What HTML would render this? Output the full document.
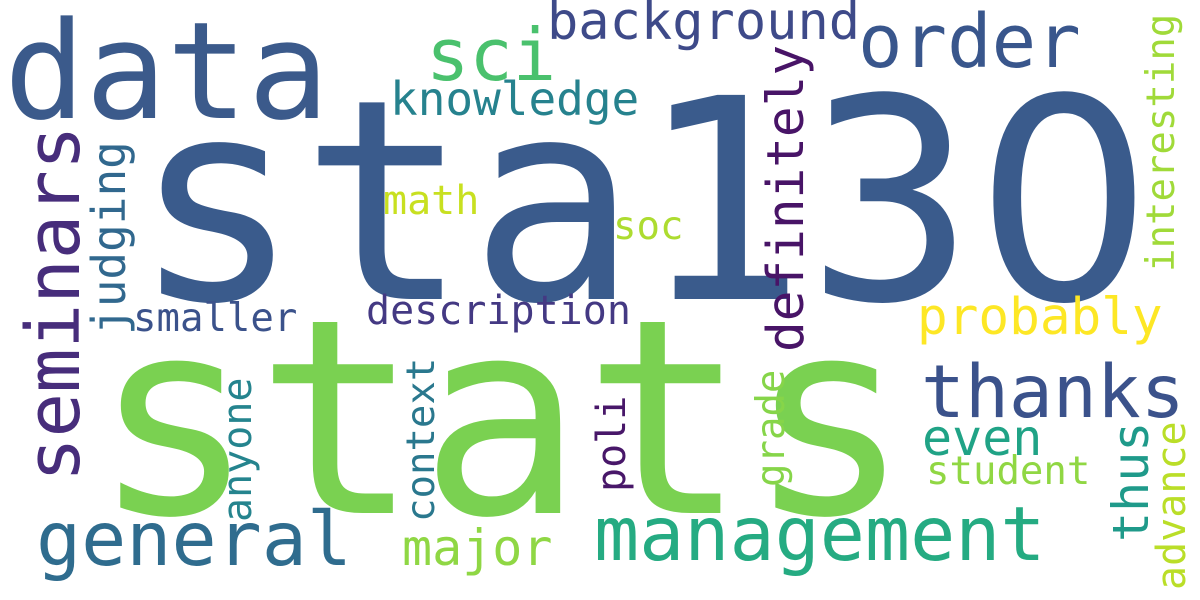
<!DOCTYPE html>
<html><head><meta charset="utf-8"><style>
html,body{margin:0;padding:0;background:#fff;}
body{width:1200px;height:600px;position:relative;overflow:hidden;font-family:"DejaVu Sans Mono","Liberation Mono",monospace;}
.w{position:absolute;line-height:1;white-space:nowrap;}
.v{position:absolute;line-height:1;white-space:nowrap;transform-origin:0 0;transform:rotate(-90deg);}
.z{display:inline-block;width:0.602em;font-family:"DejaVu Sans",sans-serif;text-align:center;}
</style></head><body>
<div class="w" style="left:132px;top:63px;font-size:280px;color:#3a5b8c">sta13<span class="z">0</span></div>
<div class="w" style="left:92px;top:284px;font-size:272px;color:#7ad151">stats</div>
<div class="w" style="left:4px;top:4px;font-size:135px;color:#3b5a8b">data</div>
<div class="w" style="left:858px;top:5px;font-size:74px;color:#39568c">order</div>
<div class="w" style="left:547px;top:-4px;font-size:52px;color:#3e4a89">background</div>
<div class="w" style="left:426px;top:19px;font-size:72px;color:#4ac16d">sci</div>
<div class="w" style="left:390px;top:76px;font-size:46px;color:#26828e">knowledge</div>
<div class="w" style="left:383px;top:181px;font-size:40px;color:#c8e020">math</div>
<div class="w" style="left:613px;top:207px;font-size:39px;color:#addc30">soc</div>
<div class="w" style="left:133px;top:299px;font-size:39px;color:#3b528b">smaller</div>
<div class="w" style="left:366px;top:291px;font-size:40px;color:#443983">description</div>
<div class="w" style="left:917px;top:292px;font-size:51px;color:#fde725">probably</div>
<div class="w" style="left:921px;top:356px;font-size:73px;color:#3b528b">thanks</div>
<div class="w" style="left:922px;top:413px;font-size:50px;color:#20a386">even</div>
<div class="w" style="left:926px;top:452px;font-size:39px;color:#90d743">student</div>
<div class="w" style="left:36px;top:502px;font-size:75px;color:#2f6c8e">general</div>
<div class="w" style="left:594px;top:497px;font-size:75px;color:#25ab82">management</div>
<div class="w" style="left:402px;top:523px;font-size:50px;color:#8fd744">major</div>
<div class="v" style="left:17px;top:482px;font-size:74px;color:#472d7b">seminars</div>
<div class="v" style="left:86px;top:335px;font-size:46px;color:#31688e">judging</div>
<div class="v" style="left:761px;top:352px;font-size:51px;color:#481467">definitely</div>
<div class="v" style="left:1142px;top:272px;font-size:39px;color:#a0da39">interesting</div>
<div class="v" style="left:1106px;top:542px;font-size:50px;color:#1f9a8a">thus</div>
<div class="v" style="left:1152px;top:590px;font-size:40px;color:#bade28">advance</div>
<div class="v" style="left:752px;top:487px;font-size:39px;color:#86d549">grade</div>
<div class="v" style="left:592px;top:492px;font-size:40px;color:#481769">poli</div>
<div class="v" style="left:402px;top:522px;font-size:39px;color:#2a788e">context</div>
<div class="v" style="left:218px;top:522px;font-size:40px;color:#25848e">anyone</div>
</body></html>
